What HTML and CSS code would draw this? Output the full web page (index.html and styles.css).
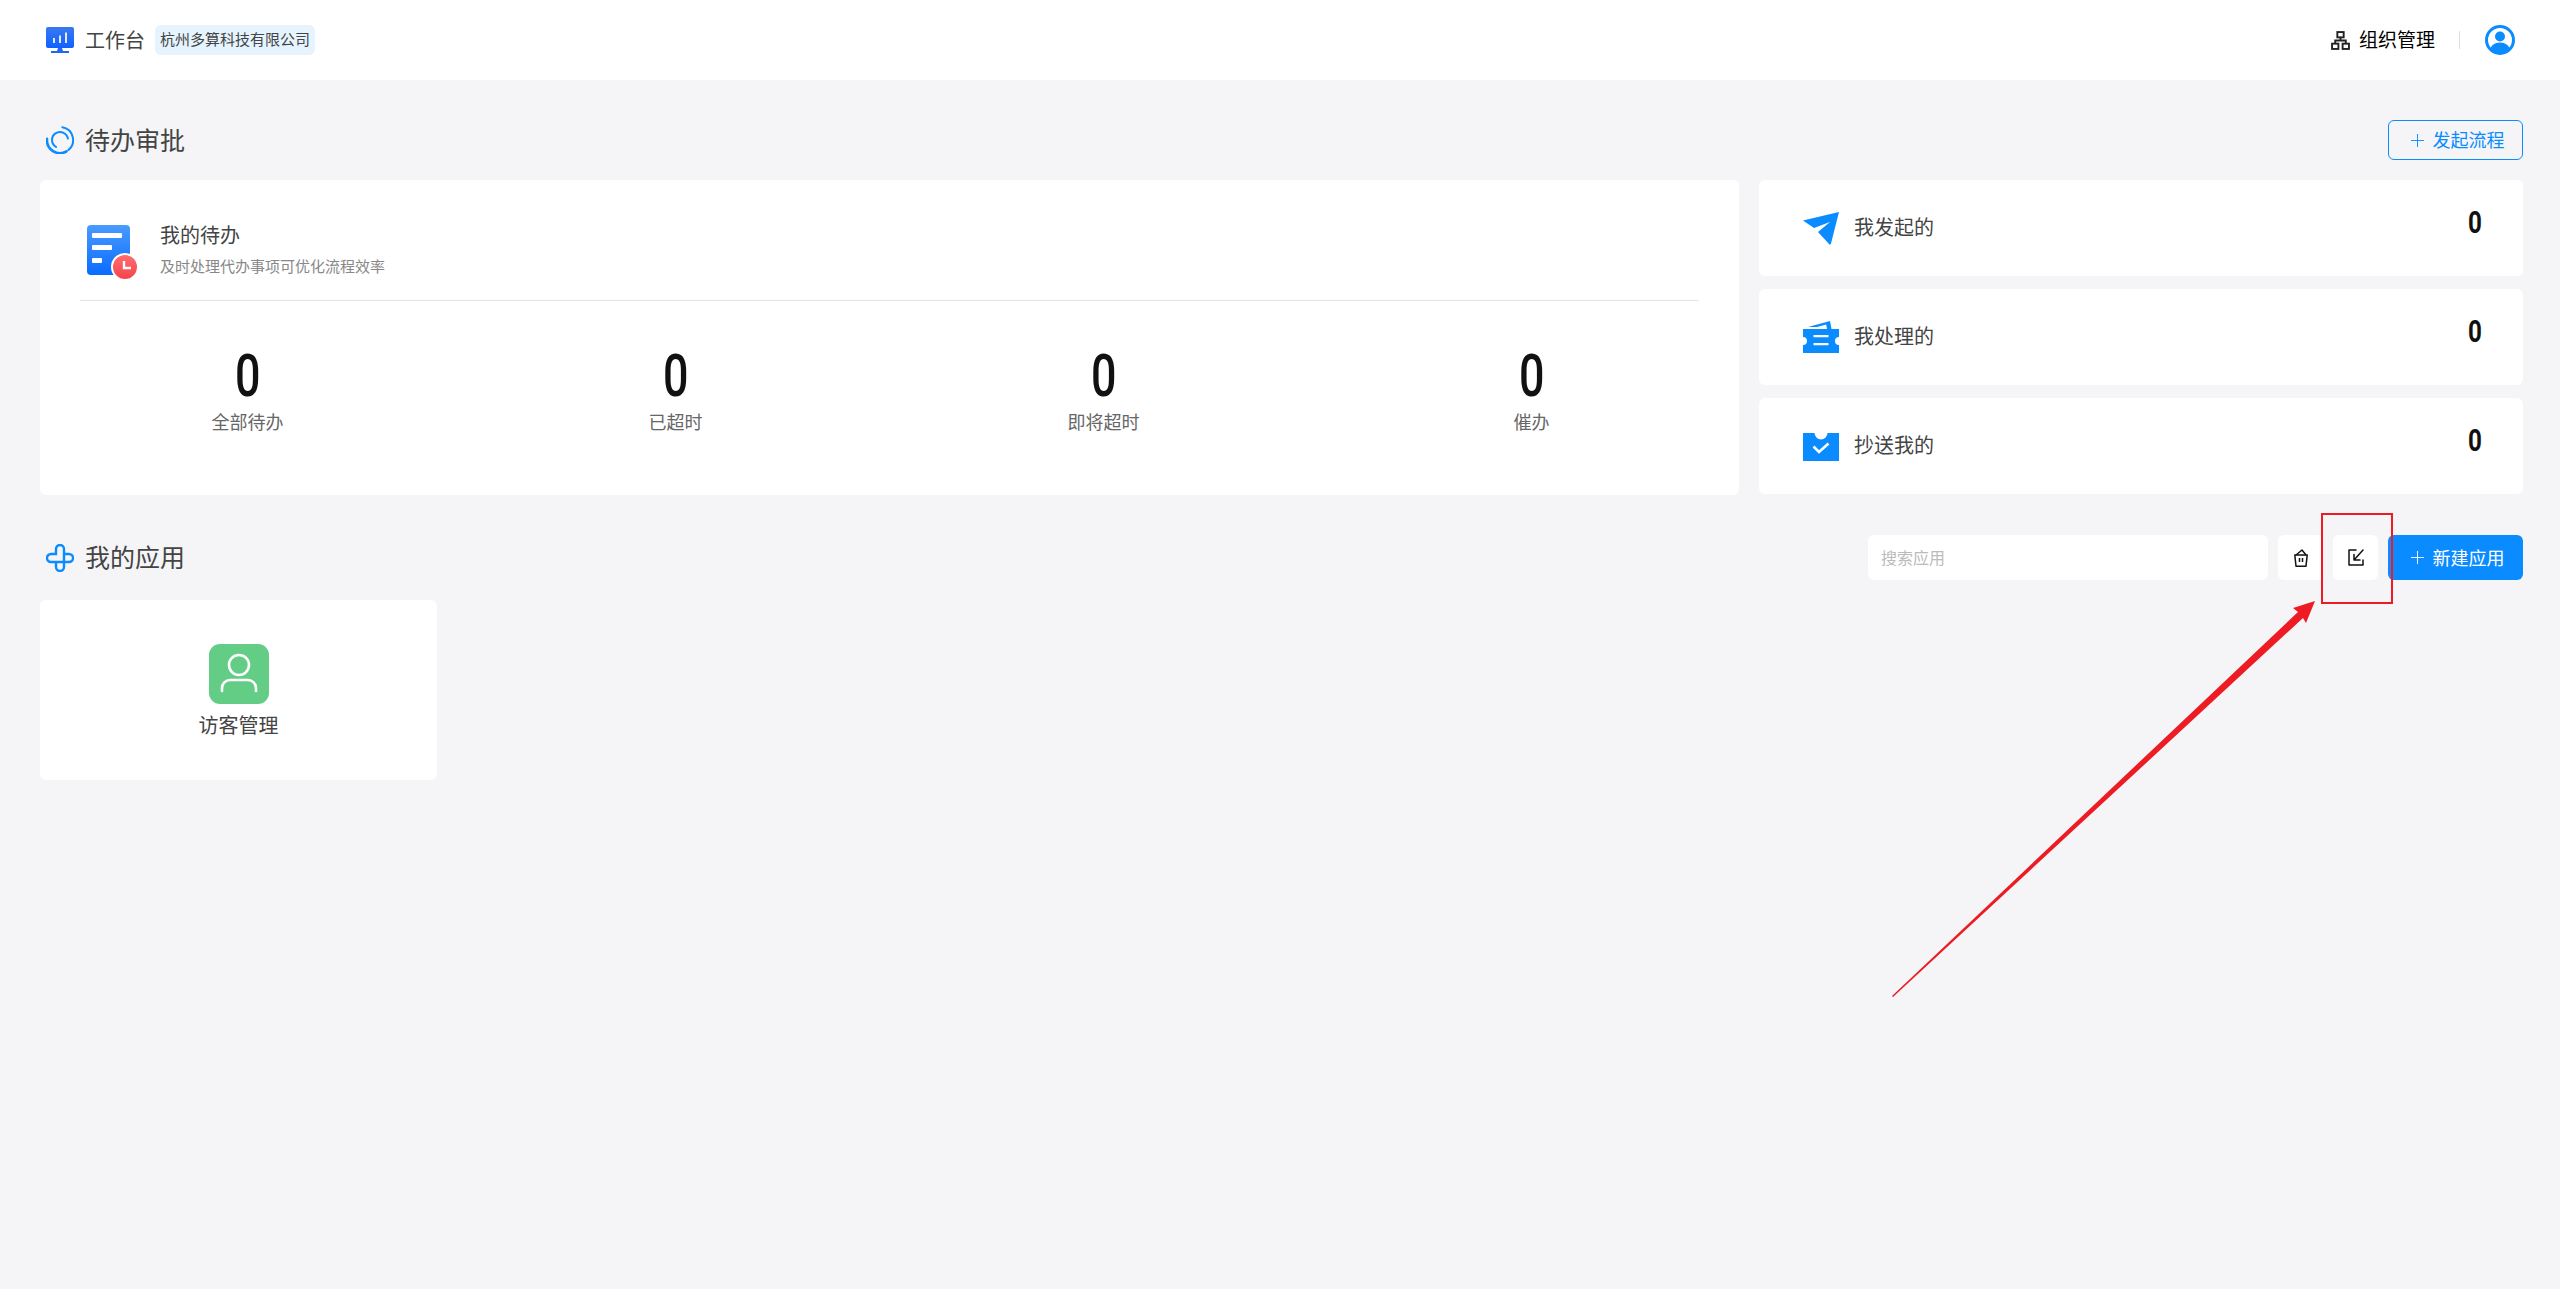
FILE: index.html
```html
<!DOCTYPE html>
<html lang="zh">
<head>
<meta charset="utf-8">
<title>工作台</title>
<link rel="stylesheet" href="styles.css">
</head>
<body>
<header class="topbar">
  <div class="brand">
    <svg class="brand-icon" viewBox="0 0 28 26"><defs><linearGradient id="lg1" x1="0" y1="0" x2="0" y2="1"><stop offset="0" stop-color="#3b78ef"/><stop offset="1" stop-color="#0f62ff"/></linearGradient></defs><rect width="28" height="21" rx="2" fill="url(#lg1)"/><rect x="7" y="11" width="2" height="5" fill="#fff" opacity=".85"/><rect x="13" y="8.5" width="2" height="7.5" fill="#fff" opacity=".85"/><rect x="19" y="5.5" width="2" height="10.5" fill="#fff" opacity=".85"/><path d="M12 21h4l1 3h6v2H5v-2h6z" fill="#1f68f0"/></svg>
    <span class="brand-name">工作台</span>
    <span class="company">杭州多算科技有限公司</span>
  </div>
  <div class="top-actions">
    <svg class="org-icon" viewBox="0 0 18 18" fill="none" stroke="#222" stroke-width="1.8"><rect x="6" y="1" width="6" height="5"/><rect x="1" y="12" width="6" height="5"/><rect x="11" y="12" width="6" height="5"/><path d="M9 6v3M4 12V9h10v3"/></svg>
    <span class="org-label">组织管理</span>
    <span class="top-divider"></span>
    <svg class="user-icon" viewBox="0 0 30 30"><defs><clipPath id="uc"><circle cx="15" cy="15" r="13.5"/></clipPath></defs><circle cx="15" cy="15" r="13.5" fill="#fff" stroke="#0a8bff" stroke-width="3"/><circle cx="15" cy="11.5" r="5" fill="#0a8bff"/><ellipse cx="15" cy="25" rx="10" ry="7.5" fill="#0a8bff" clip-path="url(#uc)"/></svg>
  </div>
</header>

<main class="page">
  <section class="sec-head sec-todo">
    <div class="sec-title">
      <svg class="sec-icon" viewBox="0 0 28 28" fill="none" stroke="#0a8bff" stroke-linecap="round"><path d="M16.300 1.200A13 13 0 0 1 22.400 24" stroke-width="2"/><path d="M20.500 25.300A13 13 0 0 1 1 12.900" stroke-width="2.600"/><path d="M10 20.900A8 8 0 1 1 21.900 12.600" stroke-width="2"/></svg>
      <h2>待办审批</h2>
    </div>
    <button class="btn btn-outline"><svg class="plus" viewBox="0 0 14 14"><path d="M7 0v14M0 7h14" stroke="currentColor" stroke-width="1"/></svg>发起流程</button>
  </section>

  <section class="summary">
    <div class="card todo-card">
      <div class="todo-head">
        <svg class="doc-icon" viewBox="0 0 52 56"><defs><linearGradient id="dg" x1="0" y1="0" x2="0" y2="1"><stop offset="0" stop-color="#4a9bff"/><stop offset="1" stop-color="#0a6cff"/></linearGradient><linearGradient id="rg" x1="0" y1="0" x2="0" y2="1"><stop offset="0" stop-color="#ff6f70"/><stop offset="1" stop-color="#f4424c"/></linearGradient></defs><rect y="0" width="43" height="50" rx="4" fill="url(#dg)"/><rect x="5" y="8" width="30" height="5" rx="1" fill="#fff"/><rect x="5" y="20" width="20" height="5" rx="1" fill="#fff"/><rect x="5" y="33" width="10" height="5" rx="1" fill="#fff"/><circle cx="38" cy="42" r="13" fill="url(#rg)" stroke="#fff" stroke-width="2"/><path d="M37 36v7h7" fill="none" stroke="#fff" stroke-width="2.400"/></svg>
        <div class="todo-text">
          <div class="todo-title">我的待办</div>
          <div class="todo-sub">及时处理代办事项可优化流程效率</div>
        </div>
      </div>
      <div class="stats">
        <div class="stat"><div class="stat-num"><span class="zero">0</span></div><div class="stat-label">全部待办</div></div>
        <div class="stat"><div class="stat-num"><span class="zero">0</span></div><div class="stat-label">已超时</div></div>
        <div class="stat"><div class="stat-num"><span class="zero">0</span></div><div class="stat-label">即将超时</div></div>
        <div class="stat"><div class="stat-num"><span class="zero">0</span></div><div class="stat-label">催办</div></div>
      </div>
    </div>
    <div class="side">
      <div class="card side-card">
        <svg class="side-icon" viewBox="0 0 36 33"><path d="M36 0 0 8.500 11 16 27 10 15 20 26.500 32.500q1 .5 1.500-1z" fill="#0a8bff"/></svg>
        <span class="side-label">我发起的</span><span class="side-num">0</span>
      </div>
      <div class="card side-card">
        <svg class="side-icon" viewBox="0 0 36 33"><path d="M5 6 27 0l1.500 8H24l-.8-4.500L14 6z" fill="#0a8bff"/><path fill-rule="evenodd" d="M0 8h36v8a3.800 3.800 0 0 0 0 8v8H0v-8a3.800 3.800 0 0 0 0-8zM10.500 14v2.300h15V14zM10.500 22v2.300h15V22z" fill="#0a8bff"/></svg>
        <span class="side-label">我处理的</span><span class="side-num">0</span>
      </div>
      <div class="card side-card">
        <svg class="side-icon" viewBox="0 0 36 33"><path d="M0 3h11.500a6.500 6.500 0 0 0 13 0H36v28H0z" fill="#0a8bff"/><path d="M10.500 16.500 16 22l9.500-8.500" fill="none" stroke="#fff" stroke-width="2.600"/></svg>
        <span class="side-label">抄送我的</span><span class="side-num">0</span>
      </div>
    </div>
  </section>

  <section class="sec-head sec-apps">
    <div class="sec-title">
      <svg class="sec-icon" viewBox="0 0 28 28" fill="none" stroke="#0a8bff" stroke-width="2.400"><path d="M10 11V5a4 4 0 0 1 8 0v18a4 4 0 0 1-8 0v-6"/><path d="M11 10H5a4 4 0 0 0 0 8h18a4 4 0 0 0 0-8h-6"/></svg>
      <h2>我的应用</h2>
    </div>
    <div class="tools">
      <input class="search" placeholder="搜索应用">
      <button class="icon-btn"><svg class="trash-icon" viewBox="0 0 14 18" fill="none" stroke="#111" stroke-width="1.500" stroke-linejoin="round"><path d="M.8 6h12.400L12 17.200H2z"/><path d="M2 6l6-5 4 5"/><path d="M5.500 9v4M8.500 9v4"/></svg></button>
      <button class="icon-btn"><svg class="import-icon" viewBox="0 0 16 17" fill="none" stroke="#111" stroke-width="1.500" stroke-linecap="round" stroke-linejoin="round"><path d="M8 1H1v15h14v-5"/><path d="M15 1 6 11M6 5.500V11h6"/></svg></button>
      <button class="btn btn-primary"><svg class="plus" viewBox="0 0 14 14"><path d="M7 0v14M0 7h14" stroke="currentColor" stroke-width="1"/></svg>新建应用</button>
    </div>
  </section>

  <div class="apps">
    <div class="card app-card">
      <span class="app-icon"><svg viewBox="0 0 60 60" fill="none" stroke="#fff" stroke-width="2.600" stroke-linecap="round"><circle cx="30" cy="21" r="10"/><path d="M13 47v-3a8 8 0 0 1 8-8h18a8 8 0 0 1 8 8v3"/></svg></span>
      <span class="app-name">访客管理</span>
    </div>
  </div>
</main>

<div class="callout-box"></div>
<svg class="callout-arrow" viewBox="0 0 2560 1289"><polygon points="1892,996 2298,612 2293,608 2315,601 2306,623 2303,618 1893,997" fill="#ed1c24"/></svg>
</body>
</html>
```
FILE: styles.css
```css
* { box-sizing: border-box; }
html, body { margin: 0; padding: 0; }
body {
  min-height: 1289px;
  background: #f5f5f7;
  color: #333;
  font-family: "Noto Sans CJK SC", "Liberation Sans", sans-serif;
  overflow: hidden;
}
.topbar {
  height: 80px;
  background: #fff;
  display: flex;
  align-items: center;
  justify-content: space-between;
  padding: 0 45px 0 46px;
}
.brand { display: flex; align-items: center; }
.brand-icon { width: 28px; height: 26px; }
.brand-name { font-size: 20px; margin-left: 11px; padding-bottom: 2px; color: #444; }
.company {
  margin-left: 10px;
  height: 30px;
  width: 160px;
  border-radius: 6px;
  background: #e6f4ff;
  font-size: 15px;
  line-height: 28px;
  text-align: center;
  color: #444;
  white-space: nowrap;
}
.top-actions { display: flex; align-items: center; }
.org-icon { width: 19px; height: 19px; }
.org-label { font-size: 19px; margin-left: 9px; padding-bottom: 3px; color: #000; }
.top-divider { width: 1px; height: 18px; background: #ddd; margin: 0 25px 0 24px; }
.user-icon { width: 30px; height: 30px; }

.page { padding: 0 37px 0 40px; }
.sec-head { display: flex; align-items: center; justify-content: space-between; }
.sec-todo { height: 40px; margin-top: 40px; }
.sec-apps { height: 45px; margin-top: 40px; }
.sec-title { display: flex; align-items: center; padding-left: 6px; }
.sec-icon { width: 28px; height: 28px; }
.sec-title h2 { margin: 0 0 0 11px; padding-bottom: 3px; font-size: 25px; font-weight: 400; color: #444; }

.btn {
  width: 135px;
  border-radius: 6px;
  font: inherit;
  font-size: 18px;
  display: flex;
  align-items: center;
  justify-content: center;
  padding: 0 0 2px 4px;
}
.plus { width: 13px; height: 13px; margin: 2px 9px 0 0; }
.btn-outline { height: 40px; border: 1.5px solid #0a8bff; background: transparent; color: #0a8bff; }
.btn-primary { height: 45px; border: 0; background: #0a8bff; color: #fff; }

.summary { display: flex; gap: 20px; margin-top: 20px; }
.card { background: #fff; border-radius: 6px; }
.todo-card { flex: 0 0 1699px; height: 315px; padding: 0 40px; }
.todo-head {
  height: 121px;
  padding: 45px 0 0 7px;
  display: flex;
  border-bottom: 1px solid #e3e3e3;
}
.doc-icon { width: 52px; height: 56px; }
.todo-text { margin-left: 21px; }
.todo-title { font-size: 20px; line-height: 24px; margin-top: -2px; color: #444; }
.todo-sub { font-size: 15px; line-height: 20px; margin-top: 9px; color: #888; }
.stats {
  display: grid;
  grid-template-columns: repeat(4, 200px);
  column-gap: 228px;
  justify-content: center;
  padding-top: 47px;
}
.stat { text-align: center; }
.stat-num {
  font-family: "Roboto", sans-serif;
  font-weight: 500;
  font-size: 59px;
  line-height: 56px;
  color: #111;
}
.zero { display: inline-block; transform: scaleX(.76); }
.stat-label { font-size: 18px; line-height: 24px; margin-top: 5px; color: #666; }

.side { flex: 1; display: flex; flex-direction: column; gap: 13px; }
.side-card {
  height: 96px;
  display: flex;
  align-items: center;
  padding: 0 39px 0 44px;
}
.side-icon { width: 36px; height: 33px; }
.side-label { font-size: 20px; margin-left: 15px; padding-bottom: 3px; color: #444; flex: 1; }
.side-num {
  display: inline-block;
  font-family: "Roboto", sans-serif;
  font-weight: 700;
  font-size: 31px;
  line-height: 32px;
  align-self: flex-start;
  margin-top: 27px;
  transform: scaleX(.78);
  color: #111;
}

.tools { display: flex; align-items: center; gap: 10px; }
.search {
  width: 400px;
  height: 45px;
  border: 0;
  border-radius: 6px;
  background: #fff;
  padding: 0 13px 2px;
  font: inherit;
  font-size: 16px;
  outline: none;
}
.search::placeholder { color: #bbb; }
.icon-btn {
  width: 45px;
  height: 45px;
  border: 0;
  border-radius: 6px;
  background: #fff;
  padding: 0;
  display: flex;
  align-items: center;
  justify-content: center;
}
.trash-icon { width: 14px; height: 18px; }
.import-icon { width: 16px; height: 17px; }

.apps { margin-top: 20px; }
.app-card {
  width: 397px;
  height: 180px;
  display: flex;
  flex-direction: column;
  align-items: center;
  padding-top: 44px;
}
.app-icon { width: 60px; height: 60px; border-radius: 11px; background: #64cd85; }
.app-icon svg { display: block; width: 60px; height: 60px; }
.app-name { font-size: 20px; line-height: 28px; margin-top: 7px; color: #444; }

.callout-box {
  position: absolute;
  left: 2321px;
  top: 513px;
  width: 72px;
  height: 91px;
  border: 2px solid #ed1c24;
}
.callout-arrow {
  position: absolute;
  left: 0;
  top: 0;
  width: 2560px;
  height: 1289px;
  pointer-events: none;
}
```
